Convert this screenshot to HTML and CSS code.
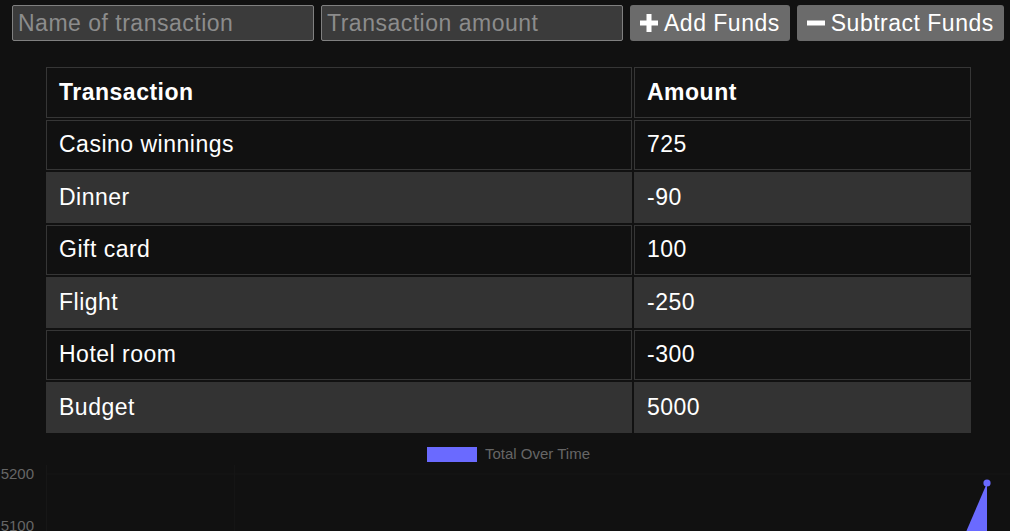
FILE: index.html
```html
<!DOCTYPE html>
<html>
<head>
<meta charset="utf-8">
<link rel="stylesheet" href="styles.css">
</head>
<body>
<div class="controls">
  <input class="field" type="text" placeholder="Name of transaction">
  <input class="field" type="text" placeholder="Transaction amount">
  <button class="btn"><svg class="ico" width="18" height="18" viewBox="0 0 18 18"><path d="M9 0v18M0 9h18" stroke="#fff" stroke-width="5"/></svg>Add Funds</button>
  <button class="btn"><svg class="ico" width="18" height="18" viewBox="0 0 18 18"><path d="M0 9h18" stroke="#fff" stroke-width="5"/></svg>Subtract Funds</button>
</div>
<div class="table-wrap">
  <table class="ledger">
    <colgroup><col class="c1"><col class="c2"></colgroup>
    <thead>
      <tr><th>Transaction</th><th>Amount</th></tr>
    </thead>
    <tbody>
      <tr><td>Casino winnings</td><td>725</td></tr>
      <tr class="alt"><td>Dinner</td><td>-90</td></tr>
      <tr><td>Gift card</td><td>100</td></tr>
      <tr class="alt"><td>Flight</td><td>-250</td></tr>
      <tr><td>Hotel room</td><td>-300</td></tr>
      <tr class="alt"><td>Budget</td><td>5000</td></tr>
    </tbody>
  </table>
</div>
<div class="chart">
  <svg width="1010" height="97" viewBox="0 0 1010 97">
    <line x1="46" y1="39" x2="1010" y2="39" stroke="#171717" stroke-width="1"/>
    <line x1="46.5" y1="30" x2="46.5" y2="97" stroke="#171717" stroke-width="1"/>
    <line x1="234.5" y1="30" x2="234.5" y2="97" stroke="#151515" stroke-width="1"/>
    <rect x="427" y="12" width="50" height="15" fill="#6a6aff"/>
    <text x="485" y="24" class="lbl">Total Over Time</text>
    <text x="34" y="44" class="lbl" text-anchor="end">5200</text>
    <text x="34" y="96" class="lbl" text-anchor="end">5100</text>
    <polygon points="987,48 966,97 987,97" fill="#6a6aff"/>
    <circle cx="987" cy="48" r="3.6" fill="#6a6aff"/>
  </svg>
</div>
</body>
</html>
```
FILE: styles.css
```css
html, body {
  margin: 0;
  padding: 0;
  background: #111111;
  font-family: "Liberation Sans", Arial, sans-serif;
  overflow: hidden;
}
.controls {
  display: flex;
  gap: 7px;
  padding: 5px 0 0 12px;
  height: 36px;
}
.field {
  box-sizing: border-box;
  width: 302px;
  height: 36px;
  margin: 0;
  background: #3b3b3b;
  border: 1px solid #808080;
  border-radius: 2px;
  color: #fff;
  font-family: "Liberation Sans", Arial, sans-serif;
  font-size: 23px;
  letter-spacing: 0.5px;
  padding: 0 5px;
  outline: none;
}
.field::placeholder {
  color: #8c8c8c;
}
.btn {
  box-sizing: border-box;
  height: 36px;
  margin: 0;
  display: flex;
  align-items: center;
  gap: 6px;
  background: #6b6b6b;
  border: none;
  border-radius: 3px;
  color: #fff;
  font-family: "Liberation Sans", Arial, sans-serif;
  font-size: 23px;
  letter-spacing: 0.5px;
  padding: 0 10px;
}
.ico {
  display: block;
}
.table-wrap {
  padding: 24px 0 0 44px;
}
.ledger {
  border-collapse: separate;
  border-spacing: 2px;
  table-layout: fixed;
  width: 929px;
  color: #fff;
  font-size: 23px;
  letter-spacing: 0.5px;
}
.c1 { width: 586px; }
.c2 { width: 337px; }
.ledger th,
.ledger td {
  box-sizing: border-box;
  height: 50.5px;
  border: 1px solid #363636;
  padding: 0 12px;
  text-align: left;
  background: #111111;
}
.ledger th {
  font-weight: bold;
}
.ledger tr.alt td {
  background: #333333;
  border-color: #333333;
}
.chart {
  height: 97px;
}
.chart svg {
  display: block;
}
.lbl {
  fill: #666666;
  font-family: "Liberation Sans", Arial, sans-serif;
  font-size: 15px;
}
```
